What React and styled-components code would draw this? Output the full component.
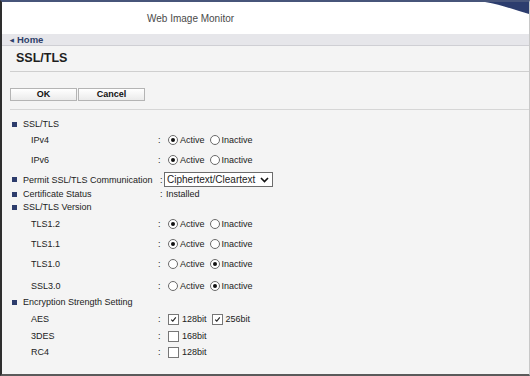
import React from 'react';
import styled, { createGlobalStyle } from 'styled-components';

const GlobalStyle = createGlobalStyle`
  html, body {
    margin: 0;
    padding: 0;
    background: #fff;
  }
  body {
    font-family: "Liberation Sans", Arial, sans-serif;
  }
`

const Frame = styled.div`
  position: relative;
  width: 530px;
  height: 376px;
  box-sizing: border-box;
  border-top: 2px solid #47557a;
  border-left: 2px solid #2e2e2e;
  border-right: 1px solid #c8c8c8;
  border-bottom: 2px solid #5a5a5a;
  background: #f4f4f4;
  display: flex;
  flex-direction: column;
  overflow: hidden;
`

const Header = styled.div`
  position: relative;
  height: 32px;
  background: #fff;
  display: flex;
  align-items: center;
  padding-left: 145px;
  font-size: 10px;
  color: #4a4a4a;
`

const Corner = styled.svg`
  position: absolute;
  top: 0;
  right: 0;
`

const Crumb = styled.div`
  height: 11px;
  background: #e6e6ea;
  border-bottom: 1px solid #cfcfd4;
  display: flex;
  align-items: center;
  padding-left: 8px;
  font-size: 9.5px;
  font-weight: bold;
  color: #2f3f6b;
`

const Arrow = styled.span`
  font-size: 5px;
  margin-right: 3px;
`

const Content = styled.div`
  margin-left: 8px;
  display: flex;
  flex-direction: column;
`

const Title = styled.div`
  height: 25px;
  line-height: 25px;
  padding-left: 6px;
  font-size: 12.5px;
  font-weight: bold;
  color: #1e1e1e;
  border-bottom: 1px solid #cfcfcf;
`

const ButtonBar = styled.div`
  display: flex;
  padding: 16px 0 8px;
  border-bottom: 1px solid #d6d6d6;
`

const Button = styled.button`
  width: 67px;
  height: 13px;
  margin: 0 1px 0 0;
  padding: 0;
  border: 1px solid #b4b4b4;
  background: linear-gradient(#ffffff, #ebebeb);
  font-family: "Liberation Sans", Arial, sans-serif;
  font-size: 9px;
  font-weight: bold;
  color: #111;
  line-height: 11px;
`

const Form = styled.div`
  padding-top: 8px;
  display: flex;
  flex-direction: column;
`

const Row = styled.div`
  display: grid;
  grid-template-columns: 148px 8px 1fr;
  align-items: center;
  height: ${p => p.$h || 12}px;
  margin-top: ${p => p.$mt || 0}px;
  font-size: 9px;
  color: #222;
  white-space: nowrap;
`

const Label = styled.div`
  display: flex;
  align-items: center;
  padding-left: ${p => (p.$sub ? 21 : 2)}px;

  ${p => !p.$sub && `
    &::before {
      content: "";
      width: 5px;
      height: 5px;
      background: #2d3c6c;
      margin-right: 6px;
    }
  `}
`

const Colon = styled.div`
  padding-left: ${p => (p.$tight ? 2 : 0)}px;
`

const Value = styled.div`
  display: flex;
  align-items: center;
`

const Option = styled.span`
  display: inline-flex;
  align-items: center;
  margin-right: 3px;
`

const Radio = styled.span`
  width: 8px;
  height: 8px;
  border: 1px solid #6a6a6a;
  border-radius: 50%;
  background: #fff;
  margin: 0 2px 0 2px;
  display: inline-flex;
  align-items: center;
  justify-content: center;

  &::after {
    content: "";
    width: 4px;
    height: 4px;
    border-radius: 50%;
    background: ${p => (p.$on ? '#111' : 'transparent')};
  }
`

const Box = styled.span`
  width: 9px;
  height: 9px;
  border: 1px solid #777;
  background: #fff;
  margin: 0 3px 0 2px;
  display: inline-flex;
  align-items: center;
  justify-content: center;
`

const Select = styled.div`
  margin-left: -2px;
  width: 102px;
  height: 13px;
  border: 1px solid #6c6c6c;
  background: #fff;
  display: flex;
  align-items: center;
  justify-content: space-between;
  padding: 0 3px 0 2px;
  font-size: 10px;
  color: #222;
`

const Check = () => (
  <svg width="7" height="7" viewBox="0 0 7 7">
    <path d="M1.2 3.6 L2.8 5.2 L5.8 1.4" fill="none" stroke="#222" strokeWidth="1.1" />
  </svg>
)

const Chevron = () => (
  <svg width="9" height="6" viewBox="0 0 9 6">
    <path d="M1 1 L4.5 4.6 L8 1" fill="none" stroke="#111" strokeWidth="1.6" />
  </svg>
)

const Radios = ({ active }) => (
  <Value>
    <Option><Radio $on={active} />Active</Option>
    <Option><Radio $on={!active} />Inactive</Option>
  </Value>
)

const Checks = ({ items }) => (
  <Value>
    {items.map(([label, on]) => (
      <Option key={label}><Box>{on && <Check />}</Box>{label}</Option>
    ))}
  </Value>
)

const Heading = ({ children, mt }) => (
  <Row $mt={mt}><Label>{children}</Label></Row>
)

const App = () => {
  return (
    <>
      <GlobalStyle />
      <Frame>
        <Header>
          Web Image Monitor
          <Corner width="44" height="12" viewBox="0 0 44 12">
            <path d="M0 0 H44 V12 C32 9 18 3 0 0 Z" fill="#2c3d6e" />
          </Corner>
        </Header>
        <Crumb><Arrow>◀</Arrow>Home</Crumb>
        <Content>
          <Title>SSL/TLS</Title>
          <ButtonBar>
            <Button>OK</Button>
            <Button>Cancel</Button>
          </ButtonBar>
          <Form>
            <Heading>SSL/TLS</Heading>
            <Row $mt={4}><Label $sub>IPv4</Label><Colon>:</Colon><Radios active /></Row>
            <Row $mt={8}><Label $sub>IPv6</Label><Colon>:</Colon><Radios active /></Row>
            <Row $mt={6} $h={15}>
              <Label>Permit SSL/TLS Communication</Label>
              <Colon $tight>:</Colon>
              <Value><Select>Ciphertext/Cleartext<Chevron /></Select></Value>
            </Row>
            <Row $mt={1}><Label>Certificate Status</Label><Colon $tight>:</Colon><Value>Installed</Value></Row>
            <Heading mt={1}>SSL/TLS Version</Heading>
            <Row $mt={5}><Label $sub>TLS1.2</Label><Colon>:</Colon><Radios active /></Row>
            <Row $mt={8}><Label $sub>TLS1.1</Label><Colon>:</Colon><Radios active /></Row>
            <Row $mt={8}><Label $sub>TLS1.0</Label><Colon>:</Colon><Radios active={false} /></Row>
            <Row $mt={10}><Label $sub>SSL3.0</Label><Colon>:</Colon><Radios active={false} /></Row>
            <Heading mt={4}>Encryption Strength Setting</Heading>
            <Row $mt={5}><Label $sub>AES</Label><Colon>:</Colon><Checks items={[['128bit', true], ['256bit', true]]} /></Row>
            <Row $mt={5}><Label $sub>3DES</Label><Colon>:</Colon><Checks items={[['168bit', false]]} /></Row>
            <Row $mt={4}><Label $sub>RC4</Label><Colon>:</Colon><Checks items={[['128bit', false]]} /></Row>
          </Form>
        </Content>
      </Frame>
    </>
  )
}

export default App;
